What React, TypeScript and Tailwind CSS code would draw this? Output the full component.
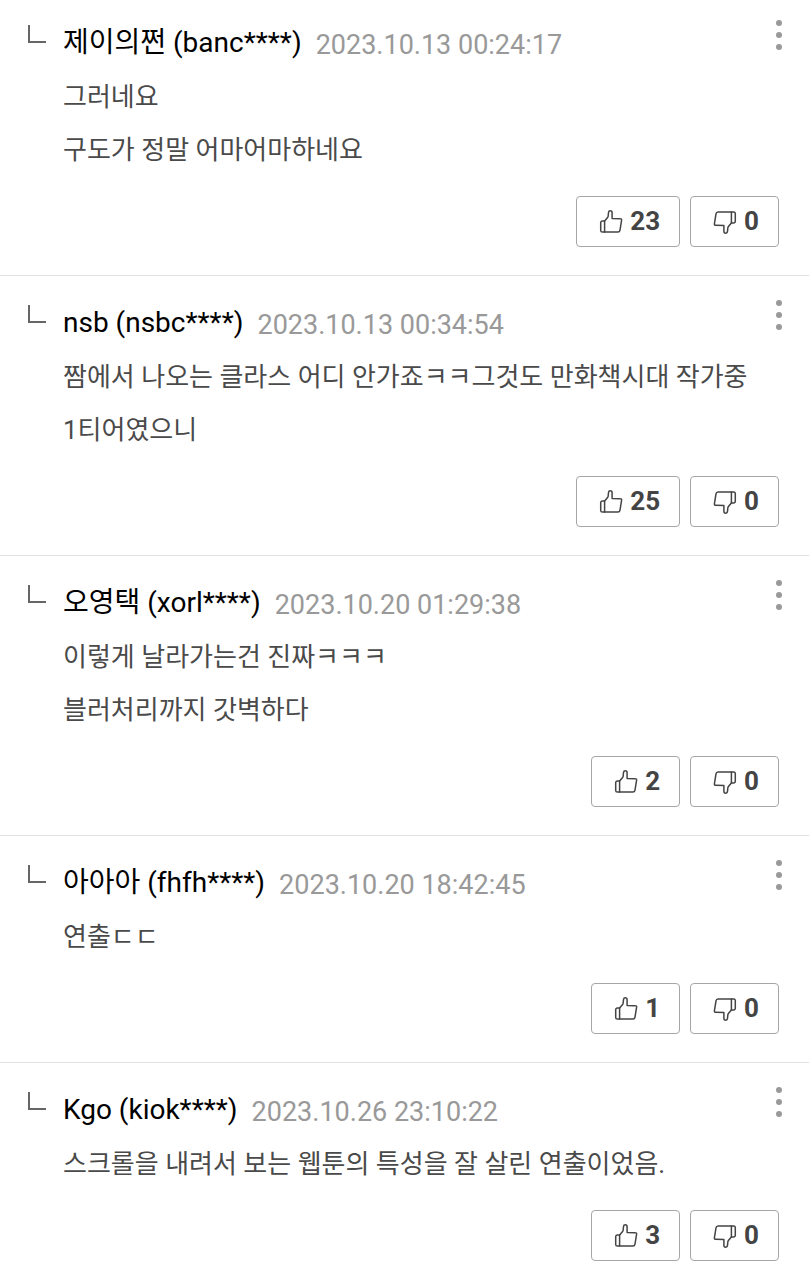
import React, { useState } from "react";

type Reply = {
  name: string;
  id: string;
  date: string;
  lines: string[];
  likes: number;
  dislikes: number;
};

const replies: Reply[] = [
  {
    name: "제이의쩐",
    id: "banc****",
    date: "2023.10.13 00:24:17",
    lines: ["그러네요", "구도가 정말 어마어마하네요"],
    likes: 23,
    dislikes: 0,
  },
  {
    name: "nsb",
    id: "nsbc****",
    date: "2023.10.13 00:34:54",
    lines: ["짬에서 나오는 클라스 어디 안가죠ㅋㅋ그것도 만화책시대 작가중 1티어였으니"],
    likes: 25,
    dislikes: 0,
  },
  {
    name: "오영택",
    id: "xorl****",
    date: "2023.10.20 01:29:38",
    lines: ["이렇게 날라가는건 진짜ㅋㅋㅋ", "블러처리까지 갓벽하다"],
    likes: 2,
    dislikes: 0,
  },
  {
    name: "아아아",
    id: "fhfh****",
    date: "2023.10.20 18:42:45",
    lines: ["연출ㄷㄷ"],
    likes: 1,
    dislikes: 0,
  },
  {
    name: "Kgo",
    id: "kiok****",
    date: "2023.10.26 23:10:22",
    lines: ["스크롤을 내려서 보는 웹툰의 특성을 잘 살린 연출이었음."],
    likes: 3,
    dislikes: 0,
  },
];

const ThumbIcon = ({ className = "" }: { className?: string }) => (
  <svg
    viewBox="0 0 24 26"
    fill="none"
    stroke="currentColor"
    strokeWidth="1.5"
    strokeLinejoin="round"
    strokeLinecap="round"
    className={`h-[26px] w-6 shrink-0 ${className}`}
    aria-hidden="true"
  >
    {/* hand */}
    <path d="M5.6 12.1 8.4 8.8c.5-.6.7-1.2.8-2l.3-3.2c.1-1.1.8-1.8 1.8-1.8 1.2 0 1.8.8 1.8 2v5.6l8.2.3c.9 0 1.4.6 1.3 1.5L21 21.1c-.2 1.3-.9 2-2.1 2H5.6" />
    {/* cuff */}
    <path d="M5.6 12.1H3.4c-1 0-1.7.7-1.7 1.7v7.6c0 1 .7 1.7 1.7 1.7h2.2z" />
  </svg>
);

const VoteButton = ({ count, down }: { count: number; down?: boolean }) => {
  const [voted, setVoted] = useState(false);

  return (
    <button
      type="button"
      aria-label={down ? "싫어요" : "좋아요"}
      aria-pressed={voted}
      onClick={() => setVoted(!voted)}
      className="flex h-[51px] cursor-pointer items-center gap-[7px] rounded-[4px] border border-[#a6a6a6] pr-[19px] pl-[22px] text-[26px] font-bold text-[#444]"
    >
      <ThumbIcon className={down ? "rotate-180" : ""} />
      <span>{voted ? count + 1 : count}</span>
    </button>
  );
};

const ReplyItem = ({ reply }: { reply: Reply }) => (
  <li className="border-b border-[#e2e2e2] pt-5 pr-[30px] pb-7 pl-7 first:pt-4 last:border-b-0">
    <div className="flex items-start">
      <span className="mt-[9px] mr-[17px] h-[18px] w-[18px] shrink-0 border-b-2 border-l-2 border-[#666]" />
      <div className="min-w-0 flex-1">
        <div className="flex h-[55px] items-start justify-between">
          <div className="flex items-start gap-[14px]">
            <strong className="text-[28px] leading-[53px] font-normal text-black">
              {reply.name} ({reply.id})
            </strong>
            <time className="text-[27px] leading-[59px] text-[#999]">{reply.date}</time>
          </div>
          <button
            type="button"
            aria-label="메뉴"
            className="-mr-[3px] flex cursor-pointer flex-col gap-[6px] pt-1 text-[#999]"
          >
            <span className="size-[6px] rounded-full bg-current" />
            <span className="size-[6px] rounded-full bg-current" />
            <span className="size-[6px] rounded-full bg-current" />
          </button>
        </div>
        <div className="text-[26px] leading-[53px] break-keep text-[#4a4a4a]">
          {reply.lines.map((line) => (
            <p key={line}>{line}</p>
          ))}
        </div>
      </div>
    </div>
    <div className="mt-[19px] flex justify-end gap-[10px]">
      <VoteButton count={reply.likes} />
      <VoteButton count={reply.dislikes} down />
    </div>
  </li>
);

const App = () => {
  return (
    <main className="min-h-screen bg-white font-[Roboto,'Noto_Sans_CJK_KR',sans-serif]">
      <ul>
        {replies.map((reply) => (
          <ReplyItem key={reply.id} reply={reply} />
        ))}
      </ul>
    </main>
  );
};

export default App;
